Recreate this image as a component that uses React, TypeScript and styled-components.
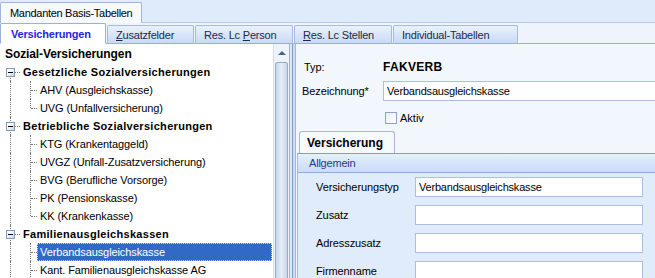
import React from 'react';
import styled, { createGlobalStyle } from 'styled-components';

const GlobalStyle = createGlobalStyle`
  html, body {
    margin: 0;
    padding: 0;
    background: #f2f6fd;
  }
  body {
    font-family: 'Liberation Sans', Arial, sans-serif;
    font-size: 11px;
    color: #000;
  }
`;

const Window = styled.div`
  width: 655px;
  height: 278px;
  overflow: hidden;
  display: flex;
  flex-direction: column;
  background: #f2f6fd;
`;

const TopStrip = styled.div`
  height: 23px;
  box-sizing: border-box;
  padding-top: 2px;
  background: #dfeafb;
  border-bottom: 1px solid #b3c8ea;
  display: flex;
`;

const TopTab = styled.div`
  width: 142px;
  height: 21px;
  box-sizing: border-box;
  padding-left: 9px;
  display: flex;
  align-items: center;
  background: #f6f9fe;
  border: 1px solid #9fb6da;
  border-bottom: none;
  border-radius: 2px 2px 0 0;
  letter-spacing: -0.3px;
`;

const TabStrip = styled.div`
  height: 21px;
  box-sizing: border-box;
  background: #eff4fc;
  border-bottom: 1px solid #9ab0d6;
  display: flex;
  align-items: flex-end;
  gap: 1px;
`;

const Tab = styled.div<{ $active?: boolean; $width: number }>`
  width: ${({ $width }) => $width}px;
  height: ${({ $active }) => ($active ? 21 : 19)}px;
  margin-bottom: -1px;
  box-sizing: border-box;
  padding-left: ${({ $active }) => ($active ? 10 : 8)}px;
  display: flex;
  align-items: center;
  border: 1px solid ${({ $active }) => ($active ? '#9ab0d6' : '#a6bbdc')};
  border-bottom: ${({ $active }) => ($active ? '1px solid #ffffff' : '1px solid #9ab0d6')};
  border-radius: 2px 2px 0 0;
  background: ${({ $active }) =>
    $active ? '#ffffff' : 'linear-gradient(#eaf1fc 0%, #d9e6f9 50%, #c8daf4 100%)'};
  color: ${({ $active }) => ($active ? '#1f1fe6' : '#1e2a44')};
  font-weight: ${({ $active }) => ($active ? 'bold' : 'normal')};
  letter-spacing: -0.2px;
  white-space: pre;
`;

const Mnemonic = styled.span`
  text-decoration: underline;
`;

const Body = styled.div`
  flex: 1;
  display: flex;
  min-height: 0;
`;

const TreePane = styled.div`
  width: 273px;
  background: #ffffff;
  padding-top: 1px;
  box-sizing: border-box;
`;

const Row = styled.div`
  height: 18px;
  display: flex;
  align-items: stretch;
`;

const Guide = styled.div<{ $width: number; $line: number; $vert: 'full' | 'top' | 'bottom' | 'none'; $horiz?: boolean }>`
  width: ${({ $width }) => $width}px;
  flex: none;
  position: relative;

  &::before {
    content: '';
    display: ${({ $vert }) => ($vert === 'none' ? 'none' : 'block')};
    position: absolute;
    left: ${({ $line }) => $line}px;
    top: ${({ $vert }) => ($vert === 'bottom' ? '9px' : '0')};
    height: ${({ $vert }) => ($vert === 'full' ? '18px' : '9px')};
    border-left: 1px dotted #7a7a7a;
  }

  &::after {
    content: '';
    display: ${({ $horiz }) => ($horiz ? 'block' : 'none')};
    position: absolute;
    left: ${({ $line }) => $line + 1}px;
    right: 0;
    top: 9px;
    border-top: 1px dotted #7a7a7a;
  }
`;

const Expander = styled.div`
  position: absolute;
  left: 6px;
  top: 5px;
  width: 9px;
  height: 9px;
  box-sizing: border-box;
  border: 1px solid #7f9db9;
  background: linear-gradient(135deg, #ffffff 30%, #c6d3e0 100%);
  z-index: 1;

  &::after {
    content: '';
    position: absolute;
    left: 1px;
    top: 3px;
    width: 5px;
    height: 1px;
    background: #000;
  }
`;

const Label = styled.div<{ $bold?: boolean; $selected?: boolean }>`
  flex: 1;
  display: flex;
  align-items: center;
  padding-left: 3px;
  margin-right: 1px;
  white-space: nowrap;
  font-weight: ${({ $bold }) => ($bold ? 'bold' : 'normal')};
  font-size: 11px;
  letter-spacing: ${({ $bold }) => ($bold ? '0.3px' : '-0.1px')};
  color: ${({ $selected }) => ($selected ? '#ffffff' : '#000000')};
  background: ${({ $selected }) => ($selected ? '#316ac5' : 'transparent')};
  outline: ${({ $selected }) => ($selected ? '1px dotted #c7d8f2' : 'none')};
  outline-offset: -1px;
`;

const RootLabel = styled(Label)`
  padding-left: 5px;
  font-size: 12px;
  letter-spacing: -0.1px;
`;

const ScrollBar = styled.div`
  width: 16px;
  display: flex;
  flex-direction: column;
  background: #eef2f9;
  border-left: 1px solid #d6dfee;
  box-sizing: border-box;
  padding: 0 1px;
`;

const ScrollArrow = styled.div`
  height: 18px;
  display: flex;
  align-items: center;
  justify-content: center;

  &::after {
    content: '';
    border-left: 4px solid transparent;
    border-right: 4px solid transparent;
    border-bottom: 4px solid #4d6185;
  }
`;

const ScrollThumb = styled.div`
  flex: 1;
  margin-bottom: -6px;
  border: 1px solid #98abc7;
  border-radius: 2px;
  background: linear-gradient(90deg, #c9d6e9, #e6edf7 50%, #c9d6e9);
`;

const Splitter = styled.div`
  width: 7px;
  flex: none;
  background: linear-gradient(
    90deg,
    #9ab0d4 0 1px,
    #dde7f7 1px 3px,
    #7f9dcb 3px 4px,
    #cfdcf0 4px 6px,
    #a2b8dc 6px 7px
  );
`;

const RightPane = styled.div`
  flex: 1;
  min-width: 0;
  display: flex;
  flex-direction: column;
  background: #f2f6fd;
`;

const Form = styled.div`
  display: grid;
  grid-template-columns: 81px 1fr;
  grid-template-rows: 18px 20px 18px;
  row-gap: 5px;
  padding: 14px 0 0 6px;
  align-items: center;
`;

const FormLabel = styled.div<{ $indent?: number }>`
  padding-left: ${({ $indent }) => $indent ?? 0}px;
  letter-spacing: -0.1px;
  white-space: nowrap;
`;

const TypeValue = styled.div`
  font-weight: bold;
  font-size: 12px;
  letter-spacing: 0.3px;
`;

const TextInput = styled.div<{ $width: number }>`
  width: ${({ $width }) => $width}px;
  height: 20px;
  box-sizing: border-box;
  border: 1px solid #abc0de;
  background: #ffffff;
  padding-left: 3px;
  display: flex;
  align-items: center;
  letter-spacing: -0.2px;
  white-space: nowrap;
`;

const CheckRow = styled.div`
  grid-column: 2;
  display: flex;
  align-items: center;
  gap: 3px;
  padding-left: 2px;
  margin-top: 5px;
`;

const CheckBox = styled.div`
  width: 12px;
  height: 12px;
  box-sizing: border-box;
  border: 1px solid #8ea4c4;
  background: linear-gradient(135deg, #e9edf3, #ffffff);
`;

const Section = styled.div`
  margin: 7px 0 0 1px;
  display: flex;
  flex-direction: column;
  flex: 1;
`;

const SectionTab = styled.div`
  align-self: flex-start;
  margin-left: 2px;
  width: 96px;
  height: 22px;
  box-sizing: border-box;
  padding-left: 7px;
  display: flex;
  align-items: center;
  background: #f6f9fe;
  border: 1px solid #a3b8da;
  border-bottom: none;
  border-radius: 3px 3px 0 0;
  font-weight: bold;
  font-size: 12px;
`;

const Panel = styled.div`
  flex: 1;
  border-left: 1px solid #a7bcdd;
  border-top: 1px solid #7d9dd2;
  background: #e0ebfb;
`;

const PanelHeader = styled.div`
  height: 19px;
  box-sizing: border-box;
  padding-left: 11px;
  display: flex;
  align-items: center;
  background: linear-gradient(#e6effc, #cadcf6);
  border-bottom: 1px solid #8eacdd;
  color: #1b3b8c;
  letter-spacing: -0.2px;
`;

const Fields = styled.div`
  display: grid;
  grid-template-columns: 99px 228px;
  grid-auto-rows: 20px;
  row-gap: 8px;
  padding: 4px 0 0 18px;
  align-items: center;
`;

type Node = {
  label: string;
  kind: 'root' | 'group' | 'child';
  first?: boolean;
  last?: boolean;
  selected?: boolean;
};

const nodes: Node[] = [
  { label: 'Sozial-Versicherungen', kind: 'root' },
  { label: 'Gesetzliche Sozialversicherungen', kind: 'group', first: true },
  { label: 'AHV (Ausgleichskasse)', kind: 'child' },
  { label: 'UVG (Unfallversicherung)', kind: 'child', last: true },
  { label: 'Betriebliche Sozialversicherungen', kind: 'group' },
  { label: 'KTG (Krankentaggeld)', kind: 'child' },
  { label: 'UVGZ (Unfall-Zusatzversicherung)', kind: 'child' },
  { label: 'BVG (Berufliche Vorsorge)', kind: 'child' },
  { label: 'PK (Pensionskasse)', kind: 'child' },
  { label: 'KK (Krankenkasse)', kind: 'child', last: true },
  { label: 'Familienausgleichskassen', kind: 'group' },
  { label: 'Verbandsausgleichskasse', kind: 'child', selected: true },
  { label: 'Kant. Familienausgleichskasse AG', kind: 'child' },
];

const TreeRow = ({ node }: { node: Node }) => {
  if (node.kind === 'root') {
    return (
      <Row>
        <RootLabel $bold>{node.label}</RootLabel>
      </Row>
    );
  }
  if (node.kind === 'group') {
    return (
      <Row>
        <Guide $width={20} $line={10} $vert={node.first ? 'bottom' : 'full'} $horiz>
          <Expander />
        </Guide>
        <Label $bold>{node.label}</Label>
      </Row>
    );
  }
  return (
    <Row>
      <Guide $width={22} $line={10} $vert="full" />
      <Guide $width={15} $line={8} $vert={node.last ? 'top' : 'full'} $horiz />
      <Label $selected={node.selected}>{node.label}</Label>
    </Row>
  );
};

const fields = [
  { label: 'Versicherungstyp', value: 'Verbandsausgleichskasse' },
  { label: 'Zusatz', value: '' },
  { label: 'Adresszusatz', value: '' },
  { label: 'Firmenname', value: '' },
];

const App = () => (
  <>
    <GlobalStyle />
    <Window>
      <TopStrip>
        <TopTab>Mandanten Basis-Tabellen</TopTab>
      </TopStrip>
      <TabStrip>
        <Tab $active $width={106}>
          <span>Versicherungen</span>
        </Tab>
        <Tab $width={87}>
          <span>
            <Mnemonic>Z</Mnemonic>usatzfelder
          </span>
        </Tab>
        <Tab $width={98}>
          <span>
            {'Res. Lc '}
            <Mnemonic>P</Mnemonic>erson
          </span>
        </Tab>
        <Tab $width={98}>
          <span>
            <Mnemonic>R</Mnemonic>es. Lc Stellen
          </span>
        </Tab>
        <Tab $width={125}>
          <span>Individual-Tabellen</span>
        </Tab>
      </TabStrip>
      <Body>
        <TreePane>
          {nodes.map((node) => (
            <TreeRow key={node.label} node={node} />
          ))}
        </TreePane>
        <ScrollBar>
          <ScrollArrow />
          <ScrollThumb />
        </ScrollBar>
        <Splitter />
        <RightPane>
          <Form>
            <FormLabel $indent={2}>Typ:</FormLabel>
            <TypeValue>FAKVERB</TypeValue>
            <FormLabel>Bezeichnung*</FormLabel>
            <TextInput $width={300}>Verbandsausgleichskasse</TextInput>
            <CheckRow>
              <CheckBox />
              <span>Aktiv</span>
            </CheckRow>
          </Form>
          <Section>
            <SectionTab>Versicherung</SectionTab>
            <Panel>
              <PanelHeader>Allgemein</PanelHeader>
              <Fields>
                {fields.map((f) => (
                  <React.Fragment key={f.label}>
                    <FormLabel>{f.label}</FormLabel>
                    <TextInput $width={228}>{f.value}</TextInput>
                  </React.Fragment>
                ))}
              </Fields>
            </Panel>
          </Section>
        </RightPane>
      </Body>
    </Window>
  </>
);

export default App;
